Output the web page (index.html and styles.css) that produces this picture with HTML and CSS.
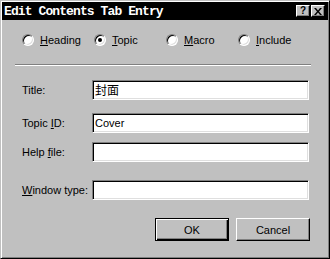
FILE: index.html
```html
<!DOCTYPE html>
<html lang="en">
  <head>
    <meta charset="UTF-8" />
    <meta name="viewport" content="width=device-width, initial-scale=1.0" />
    <title>Edit Contents Tab Entry</title>
    <link rel="stylesheet" href="styles.css">
  </head>
  <body>
    <div class="dialog">
      <div class="titlebar">
        <span class="caption">Edit Contents Tab Entry</span>
        <span class="cap-btn help">?</span>
        <span class="cap-btn close">
          <svg width="8" height="7" viewBox="0 0 8 7">
            <path d="M0 0h2l2 2.5 2-2.5h2l-3 3.5 3 3.5h-2l-2-2.5-2 2.5h-2l3-3.5z" fill="#000" />
          </svg>
        </span>
      </div>

      <div class="content">
        <div class="types">
          <label class="option"><span class="radio"></span><span><u>H</u>eading</span></label>
          <label class="option"><span class="radio checked"></span><span><u>T</u>opic</span></label>
          <label class="option"><span class="radio"></span><span><u>M</u>acro</span></label>
          <label class="option"><span class="radio"></span><span><u>I</u>nclude</span></label>
        </div>

        <div class="separator"></div>

        <div class="field first">
          <label>Title:</label>
          <div class="edit cjk">封面</div>
        </div>
        <div class="field second">
          <label>Topic <u>I</u>D:</label>
          <div class="edit">Cover</div>
        </div>
        <div class="field third">
          <label>Help <u>f</u>ile:</label>
          <div class="edit"></div>
        </div>
        <div class="field fourth">
          <label><u>W</u>indow type:</label>
          <div class="edit"></div>
        </div>

        <div class="buttons">
          <button class="btn default">OK</button>
          <button class="btn">Cancel</button>
        </div>
      </div>
    </div>
  </body>
</html>
```

FILE: styles.css
```css
body {
  margin: 0;
  background-color: #c0c0c0;
  font-family: "Liberation Sans", Arial, sans-serif;
  font-size: 11px;
  color: #000;
  overflow: hidden;
}

.dialog {
  width: 330px;
  height: 259px;
  box-sizing: border-box;
  padding: 1px;
  border: 1px solid;
  border-color: #c0c0c0 #000 #000 #c0c0c0;
  box-shadow: inset 1px 1px #fff, inset -1px -1px #808080;
  background-color: #c0c0c0;
}

.titlebar {
  height: 18px;
  display: flex;
  align-items: center;
  gap: 1px;
  padding: 0 3px 0 2px;
  background-color: #000;
}

.caption {
  flex: 1;
  color: #fff;
  font-family: "Liberation Mono", "Courier New", monospace;
  font-weight: bold;
  font-size: 13px;
  letter-spacing: -0.9px;
  white-space: nowrap;
}

.cap-btn {
  width: 14px;
  height: 12px;
  box-sizing: border-box;
  display: flex;
  align-items: center;
  justify-content: center;
  background-color: #c0c0c0;
  border: 1px solid;
  border-color: #fff #000 #000 #fff;
  box-shadow: inset -1px -1px #808080;
  font-weight: bold;
  font-size: 10px;
  line-height: 10px;
}

.types {
  display: flex;
  margin-top: 14px;
  padding-left: 20px;
  height: 12px;
}

.option {
  width: 72px;
  display: flex;
  align-items: center;
  gap: 6px;
  line-height: 12px;
}

.radio {
  width: 12px;
  height: 12px;
  box-sizing: border-box;
  border-radius: 50%;
  border: 1px solid;
  border-color: #808080 #fff #fff #808080;
  box-shadow: inset 1px 1px #000, inset -1px -1px #dfdfdf;
  background-color: #fff;
  display: flex;
  align-items: center;
  justify-content: center;
}

.radio.checked::after {
  content: "";
  width: 4px;
  height: 4px;
  border-radius: 50%;
  background-color: #000;
}

.separator {
  width: 296px;
  margin: 18px 0 0 13px;
  border-top: 1px solid #808080;
  border-bottom: 1px solid #fff;
}

.field {
  display: flex;
  align-items: center;
  height: 20px;
  padding-left: 20px;
}
.field.first {
  margin-top: 14px;
}
.field.second {
  margin-top: 13px;
}
.field.third {
  margin-top: 9px;
}
.field.fourth {
  margin-top: 18px;
}

.field label {
  width: 70px;
  white-space: nowrap;
}

.edit {
  width: 217px;
  height: 20px;
  box-sizing: border-box;
  padding: 1px 0 0 1px;
  border: 1px solid;
  border-color: #808080 #fff #fff #808080;
  box-shadow: inset 1px 1px #000, inset -1px -1px #dfdfdf;
  background-color: #fff;
  line-height: 16px;
  padding-left: 2px;
}

.edit.cjk {
  font-family: "Noto Sans CJK SC", sans-serif;
  font-size: 12px;
}

.buttons {
  display: flex;
  justify-content: flex-end;
  gap: 7px;
  margin-top: 18px;
  padding-right: 18px;
}

.btn {
  width: 74px;
  height: 23px;
  box-sizing: border-box;
  padding: 0;
  background-color: #c0c0c0;
  border: 1px solid;
  border-color: #fff #000 #000 #fff;
  box-shadow: inset -1px -1px #808080;
  font-family: "Liberation Sans", Arial, sans-serif;
  font-size: 11px;
  color: #000;
}

.btn.default {
  border-color: #000;
  box-shadow: inset 1px 1px #fff, inset -1px -1px #000, inset -2px -2px #808080;
}
```
